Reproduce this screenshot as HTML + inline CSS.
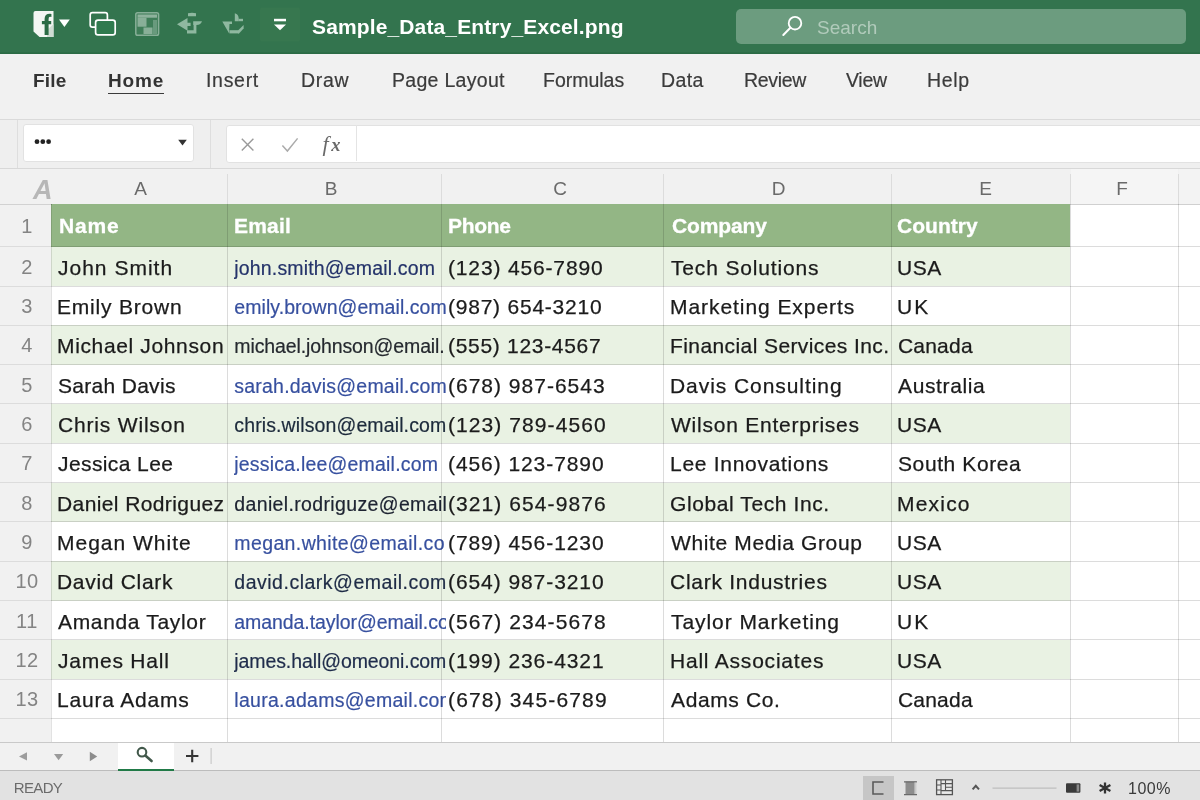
<!DOCTYPE html>
<html><head><meta charset="utf-8"><title>Excel</title>
<style>
*{box-sizing:border-box;margin:0;padding:0}
html,body{width:1200px;height:800px;overflow:hidden;background:#fff;font-family:"Liberation Sans",sans-serif;}
body{position:relative}
#title,#ribbon,#fbar,#namebox,#fxbox,#colhdr,#grid,#tabs,#status{will-change:transform}
.abs{position:absolute}
#title{position:absolute;left:0;top:0;width:1200px;height:54.5px;background:linear-gradient(#33744e 0,#33744e 51.5px,#2b6b45 53px,#2b6b45 54.5px)}
#title .fname{position:absolute;left:312px;top:0;height:54px;line-height:53px;color:#fff;font-weight:bold;font-size:21px;letter-spacing:0.2px;white-space:nowrap}
#search{position:absolute;left:736px;top:9px;width:450px;height:35px;border-radius:5px;background:#6c9c7f}
#search .ph{position:absolute;left:82px;top:0;height:35px;line-height:37px;font-size:19px;color:#b1cbbb;letter-spacing:0.4px}
#ribbon{position:absolute;left:0;top:54px;width:1200px;height:65px;background:#f1f1f1}
#ribbon .tab{position:absolute;top:0;height:52px;line-height:53.4px;font-size:19.5px;color:#3b3b3b;white-space:nowrap;letter-spacing:0.7px;-webkit-text-stroke:0.2px #3b3b3b}
#ribbon .tab.b{font-weight:bold;letter-spacing:0.2px;-webkit-text-stroke:0;font-size:19px;color:#333}
#fbar{position:absolute;left:0;top:119px;width:1200px;height:50px;background:#efefef;border-top:1px solid #dadada;border-bottom:1px solid #d8d8d8}
#namebox{position:absolute;left:23px;top:124px;width:171px;height:38px;background:#fff;border:1px solid #e2e2e2;border-radius:3px}
#fxbox{position:absolute;left:226px;top:125px;width:980px;height:37.5px;background:#fff;border:1px solid #e2e2e2;border-radius:3px}
#colhdr{position:absolute;left:0;top:169px;width:1200px;height:35px;background:#f1f1f1}
#colhdr .cl{position:absolute;top:0;height:35px;line-height:40.4px;font-size:19px;color:#6a6a6a;text-align:center;width:30px;margin-left:-15px}
#rowhdr{position:absolute;left:0;top:204px;width:52px;height:538px;background:#f1f1f1}
#grid{position:absolute;left:0;top:0;width:1200px;height:742px;overflow:hidden}
.hrow{position:absolute;background:#93b685}
.band{position:absolute;background:#e9f2e3}
.hc{position:absolute;color:#fff;font-weight:bold;font-size:21px;-webkit-text-stroke:0.3px #fff;white-space:nowrap;letter-spacing:0.2px}
.dc{position:absolute;color:#1b1b1b;font-size:21px;-webkit-text-stroke:0.25px #1b1b1b;white-space:nowrap;letter-spacing:1px;overflow:visible}
.dc.em{overflow:hidden;color:#37509f;font-size:19.5px;letter-spacing:0.3px;-webkit-text-stroke:0.2px #37509f}
.rn{position:absolute;left:1px;width:52px;text-align:center;color:#848484;font-size:20px;letter-spacing:0.5px}
.hl{position:absolute;left:0;width:1200px;height:1px;background:#dcdcdc;mix-blend-mode:multiply}
.vl{position:absolute;top:174px;height:568px;width:1px;background:#dcdcdc;mix-blend-mode:multiply}
#tabs{position:absolute;left:0;top:742px;width:1200px;height:29px;background:#f1f1f1;border-top:1px solid #c9c9c9}
#status{position:absolute;left:0;top:770px;width:1200px;height:30px;background:#e2e2e2;border-top:1px solid #bcbcbc}
#status .rdy{position:absolute;left:14px;top:0;height:30px;line-height:34px;font-size:15px;color:#6b6b6b;letter-spacing:0.6px}
#status .zoom{position:absolute;left:1129px;top:0;height:30px;line-height:35px;font-size:16px;color:#3a3a3a;letter-spacing:0.5px}

#colhdr .corner{position:absolute;left:33px;top:0;height:35px;line-height:42.5px;font-size:27px;font-weight:bold;font-style:italic;color:#b7b7b7}

#c0_0{letter-spacing:1.001px!important;left:58.00px!important}
#c1_0{letter-spacing:0.800px!important;left:57.00px!important}
#c2_0{letter-spacing:0.642px!important;left:57.00px!important}
#c3_0{letter-spacing:0.300px!important;left:58.00px!important}
#c4_0{letter-spacing:0.819px!important;left:58.00px!important}
#c5_0{letter-spacing:0.400px!important;left:58.00px!important}
#c6_0{letter-spacing:0.398px!important;left:57.00px!important}
#c7_0{letter-spacing:1.000px!important;left:57.00px!important}
#c8_0{letter-spacing:0.700px!important;left:57.00px!important}
#c9_0{letter-spacing:0.667px!important;left:58.00px!important}
#c10_0{letter-spacing:0.779px!important;left:58.00px!important}
#c11_0{letter-spacing:0.800px!important;left:57.00px!important}
#c0_2{letter-spacing:0.847px!important;left:448.00px!important}
#c1_2{letter-spacing:0.770px!important;left:448.00px!important}
#c2_2{letter-spacing:0.693px!important;left:448.00px!important}
#c3_2{letter-spacing:1.001px!important;left:448.00px!important}
#c4_2{letter-spacing:1.078px!important;left:448.00px!important}
#c5_2{letter-spacing:0.924px!important;left:448.00px!important}
#c6_2{letter-spacing:1.078px!important;left:448.00px!important}
#c7_2{letter-spacing:0.924px!important;left:448.00px!important}
#c8_2{letter-spacing:0.924px!important;left:448.00px!important}
#c9_2{letter-spacing:1.078px!important;left:448.00px!important}
#c10_2{letter-spacing:0.924px!important;left:448.00px!important}
#c11_2{letter-spacing:1.155px!important;left:448.00px!important}
#c0_3{letter-spacing:0.846px!important;left:671.00px!important}
#c1_3{letter-spacing:0.938px!important;left:670.00px!important}
#c2_3{letter-spacing:0.409px!important;left:670.00px!important}
#c3_3{letter-spacing:0.934px!important;left:670.00px!important}
#c4_3{letter-spacing:0.765px!important;left:671.00px!important}
#c5_3{letter-spacing:0.714px!important;left:670.00px!important}
#c6_3{letter-spacing:0.600px!important;left:670.00px!important}
#c7_3{letter-spacing:0.625px!important;left:671.00px!important}
#c8_3{letter-spacing:0.733px!important;left:670.00px!important}
#c9_3{letter-spacing:0.933px!important;left:671.00px!important}
#c10_3{letter-spacing:0.786px!important;left:670.00px!important}
#c11_3{letter-spacing:0.625px!important;left:671.00px!important}
#c0_4{letter-spacing:0.500px!important;left:897.00px!important}
#c1_4{letter-spacing:2.000px!important;left:897.00px!important}
#c2_4{letter-spacing:0.200px!important;left:898.00px!important}
#c3_4{letter-spacing:0.625px!important;left:898.00px!important}
#c4_4{letter-spacing:0.500px!important;left:897.00px!important}
#c5_4{letter-spacing:0.600px!important;left:898.00px!important}
#c6_4{letter-spacing:1.200px!important;left:897.00px!important}
#c7_4{letter-spacing:0.500px!important;left:897.00px!important}
#c8_4{letter-spacing:0.500px!important;left:897.00px!important}
#c9_4{letter-spacing:2.000px!important;left:897.00px!important}
#c10_4{letter-spacing:0.500px!important;left:897.00px!important}
#c11_4{letter-spacing:0.200px!important;left:898.00px!important}
#h0{letter-spacing:0.866px!important;left:59.00px!important}
#h1{letter-spacing:0.200px!important;left:234.00px!important}
#h2{letter-spacing:-0.300px!important;left:448.00px!important}
#h3{letter-spacing:-0.134px!important;left:672.00px!important}
#h4{letter-spacing:0.033px!important;left:897.00px!important}
#t_file{letter-spacing:0.200px!important;left:33.00px!important}
#t_home{letter-spacing:0.867px!important;left:108.00px!important}
#t_insert{letter-spacing:0.700px!important;left:206.00px!important}
#t_draw{letter-spacing:0.701px!important;left:301.00px!important}
#t_page{letter-spacing:0.300px!important;left:392.00px!important}
#t_form{letter-spacing:-0.015px!important;left:543.00px!important}
#t_data{letter-spacing:0.366px!important;left:661.00px!important}
#t_review{letter-spacing:-0.300px!important;left:744.00px!important}
#t_view{letter-spacing:-0.301px!important;left:846.00px!important}
#t_help{letter-spacing:0.701px!important;left:927.00px!important}
#fname{letter-spacing:0.130px!important;left:312.00px!important}
#rdy{letter-spacing:-0.650px!important;left:13.80px!important}
#zoom{letter-spacing:0.500px!important;left:1128.00px!important}
#sph{letter-spacing:0.000px!important;left:81.00px!important}
#c0_1{letter-spacing:0.164px!important;left:234.30px!important}
#c1_1{letter-spacing:0.060px!important;left:234.30px!important}
#c2_1{letter-spacing:-0.109px!important;left:234.30px!important}
#c3_1{letter-spacing:0.210px!important;left:234.30px!important}
#c4_1{letter-spacing:0.118px!important;left:234.30px!important}
#c5_1{letter-spacing:0.200px!important;left:234.30px!important}
#c6_1{letter-spacing:0.357px!important;left:234.30px!important}
#c7_1{letter-spacing:0.384px!important;left:234.30px!important}
#c8_1{letter-spacing:0.510px!important;left:234.30px!important}
#c9_1{letter-spacing:-0.073px!important;left:234.30px!important}
#c10_1{letter-spacing:-0.090px!important;left:234.30px!important}
#c11_1{letter-spacing:0.280px!important;left:234.30px!important}
</style></head>
<body>
<div id="title">
  <svg class="abs" style="left:0;top:0" width="310" height="54" viewBox="0 0 310 54">
    <!-- app icon -->
    <path d="M35.5 11 H53.5 V37 H39.5 L33.5 31.5 V13 Q33.5 11 35.5 11 Z" fill="#f3f6f3"/>
    <path d="M47 30 L53.5 24 V37 H47 Z" fill="#cfdcd3"/>
    <path d="M44.6 35 V24.2 H41.9 V21 H44.6 V19 Q44.6 13.6 50 13.7 Q51 13.7 51.4 13.9 V17 Q50.6 16.8 50 16.8 Q48.6 16.9 48.6 19 V21 H51.2 V24.2 H48.6 V35 Z" fill="#2b6b45"/>
    <path d="M59 19.5 H69.8 L64.4 27 Z" fill="#fff"/>
    <!-- two overlapping rects -->
    <rect x="90.2" y="12.7" width="17.2" height="14.4" rx="2.2" fill="none" stroke="#fff" stroke-width="1.7"/>
    <rect x="95.6" y="20.2" width="19.6" height="14.6" rx="2.4" fill="#2f7a4e" stroke="#fff" stroke-width="1.7"/>
    <!-- faded layout icon -->
    <g opacity="0.5">
      <rect x="135.8" y="12.8" width="22.8" height="22.4" rx="1.8" fill="#5d937195" stroke="#dbe8df" stroke-width="1.5"/>
      <rect x="137.5" y="14.5" width="19.5" height="3.2" fill="#e8f0ea"/>
      <rect x="137.5" y="17.7" width="9" height="9" fill="#dfeae2"/>
      <rect x="143.5" y="27.5" width="9" height="6.5" fill="#dfeae2"/>
      <rect x="153" y="20" width="4" height="14" fill="#9fc0ac"/>
    </g>
    <!-- faded undo -->
    <g fill="#8fb8a0">
      <path d="M177 24.3 L187.5 17.9 V22.8 H190.6 V26 H187.5 V30.7 Z"/>
      <path d="M188 13.2 Q192 12.3 196 13.2 V16.2 H188 Z"/>
      <path d="M193.2 21.2 H202 Q201 24.8 196.5 25 H193.2 Z"/>
      <path d="M193.6 25 H196.4 V33.4 H187 V30.2 H193.6 Z"/>
    </g>
    <!-- faded redo -->
    <g fill="#8fb8a0">
      <path d="M234.8 13.2 Q238.6 14 238.8 19 V21.2 H234.8 Z"/>
      <path d="M238.8 18.8 H243 V21.2 H238.8 Z"/>
      <path d="M222.3 21.4 H232 V24 H229.5 L229 33.2 Z"/>
      <path d="M229.4 30.2 H238.6 V33.4 H229.4 Z"/>
      <path d="M238 30.6 L243.6 25 V28.4 L239 33.4 H238 Z"/>
    </g>
    <!-- customize -->
    <rect x="260" y="7.5" width="40" height="34" rx="2" fill="#37774f"/>
    <rect x="274" y="18.8" width="12" height="2.5" fill="#fff"/>
    <path d="M274 24.6 H286 L280 30.2 Z" fill="#fff"/>
  </svg>
  <div class="fname" id="fname">Sample_Data_Entry_Excel.png</div>
  <div id="search">
    <svg class="abs" style="left:40px;top:4px" width="30" height="28" viewBox="776 13 30 28"><circle cx="795" cy="23.2" r="6.3" fill="none" stroke="#fff" stroke-width="1.8"/><path d="M790.4 27.8 L783.3 35" stroke="#fff" stroke-width="2" stroke-linecap="round"/></svg>
    <div class="ph" id="sph">Search</div>
  </div>
</div>
<div id="ribbon">
  <div id="t_file" class="tab b" style="left:33px">File</div>
  <div id="t_home" class="tab b" style="left:108px">Home</div>
  <div id="t_insert" class="tab" style="left:207px">Insert</div>
  <div id="t_draw" class="tab" style="left:302px">Draw</div>
  <div id="t_page" class="tab" style="left:393px">Page Layout</div>
  <div id="t_form" class="tab" style="left:544px">Formulas</div>
  <div id="t_data" class="tab" style="left:662px">Data</div>
  <div id="t_review" class="tab" style="left:744px">Review</div>
  <div id="t_view" class="tab" style="left:845px">View</div>
  <div id="t_help" class="tab" style="left:928px">Help</div>
  <div class="abs" style="left:108px;top:38.5px;width:56px;height:1.5px;background:#3b3b3b"></div>
</div>
<div id="fbar">
  <div class="abs" style="left:17px;top:0;width:1px;height:48px;background:#dedede"></div>
  <div class="abs" style="left:210px;top:0;width:1px;height:48px;background:#dedede"></div>
</div>
<div id="namebox">
  <svg class="abs" style="left:-1px;top:-1px" width="171" height="38" viewBox="23 124 171 38">
    <circle cx="37" cy="141.7" r="2.4" fill="#222"/><circle cx="42.8" cy="141.7" r="2.4" fill="#222"/><circle cx="48.6" cy="141.7" r="2.4" fill="#222"/>
    <path d="M178.2 139.8 H186.8 L182.5 145.6 Z" fill="#333"/>
  </svg>
</div>
<div id="fxbox">
  <svg class="abs" style="left:-1px;top:-2px" width="140" height="38" viewBox="226 124 140 38">
    <path d="M241.8 138.8 L253.4 150.4 M253.4 138.8 L241.8 150.4" stroke="#9a9a9a" stroke-width="1.4" fill="none"/>
    <path d="M282.4 145.6 L287.4 151 L297.6 138.4" stroke="#ababab" stroke-width="1.5" fill="none"/>
    <text x="322.5" y="150.6" font-family="Liberation Serif" font-style="italic" font-size="22" fill="#6a6a6a">f</text>
    <text x="331.3" y="150.6" font-family="Liberation Serif" font-style="italic" font-weight="bold" font-size="18.5" fill="#6a6a6a">x</text>
    <rect x="356" y="125" width="1" height="36" fill="#e4e4e4"/>
  </svg>
</div>
<div id="colhdr">
  <div class="abs" style="left:1070.5px;top:0;width:107.5px;height:35px;background:#f5f5f5"></div>
  <div class="abs" style="left:1178.5px;top:0;width:22px;height:35px;background:#f3f3f3"></div>
  <div class="corner">A</div>
  <div class="cl" style="left:140.7px">A</div>
  <div class="cl" style="left:331px">B</div>
  <div class="cl" style="left:560px">C</div>
  <div class="cl" style="left:778.5px">D</div>
  <div class="cl" style="left:985.5px">E</div>
  <div class="cl" style="left:1122px">F</div>
</div>
<div id="rowhdr"></div>

<div id="grid">
<div class="hrow" style="top:204px;height:42.69999999999999px;left:51px;width:1019px"></div>
<div class="hc" id="h0" style="left:58px;top:204px;height:42.69999999999999px;line-height:43.69999999999999px">Name</div>
<div class="hc" id="h1" style="left:233px;top:204px;height:42.69999999999999px;line-height:43.69999999999999px">Email</div>
<div class="hc" id="h2" style="left:447px;top:204px;height:42.69999999999999px;line-height:43.69999999999999px">Phone</div>
<div class="hc" id="h3" style="left:669px;top:204px;height:42.69999999999999px;line-height:43.69999999999999px">Company</div>
<div class="hc" id="h4" style="left:897px;top:204px;height:42.69999999999999px;line-height:43.69999999999999px">Country</div>
<div class="rn" id="rn1" style="top:204px;height:43px;line-height:45px">1</div>
<div class="band" style="top:246.70px;height:39.32px;left:51px;width:1019px"></div>
<div class="rn" id="rn2" style="top:246.70px;height:39.32px;line-height:41.72px">2</div>
<div class="dc" id="c0_0" style="left:58px;top:246.70px;height:39.32px;line-height:41.52px;width:168px">John Smith</div>
<div class="dc em" id="c0_1" style="left:233.5px;color:#24336a;-webkit-text-stroke-color:#24336a;top:246.70px;height:39.32px;line-height:42.52px;width:213.5px">john.smith@email.com</div>
<div class="dc" id="c0_2" style="left:447px;top:246.70px;height:39.32px;line-height:41.52px;width:215px">(123) 456-7890</div>
<div class="dc" id="c0_3" style="left:669px;top:246.70px;height:39.32px;line-height:41.52px;width:221px">Tech Solutions</div>
<div class="dc" id="c0_4" style="left:897px;top:246.70px;height:39.32px;line-height:41.52px;width:172px">USA</div>
<div class="rn" id="rn3" style="top:286.02px;height:39.32px;line-height:41.72px">3</div>
<div class="dc" id="c1_0" style="left:58px;top:286.02px;height:39.32px;line-height:41.52px;width:168px">Emily Brown</div>
<div class="dc em" id="c1_1" style="left:233.5px;color:#37509f;-webkit-text-stroke-color:#37509f;top:286.02px;height:39.32px;line-height:42.52px;width:213.5px">emily.brown@email.com</div>
<div class="dc" id="c1_2" style="left:447px;top:286.02px;height:39.32px;line-height:41.52px;width:215px">(987) 654-3210</div>
<div class="dc" id="c1_3" style="left:669px;top:286.02px;height:39.32px;line-height:41.52px;width:221px">Marketing Experts</div>
<div class="dc" id="c1_4" style="left:897px;top:286.02px;height:39.32px;line-height:41.52px;width:172px">UK</div>
<div class="band" style="top:325.34px;height:39.32px;left:51px;width:1019px"></div>
<div class="rn" id="rn4" style="top:325.34px;height:39.32px;line-height:41.72px">4</div>
<div class="dc" id="c2_0" style="left:58px;top:325.34px;height:39.32px;line-height:41.52px;width:168px">Michael Johnson</div>
<div class="dc em" id="c2_1" style="left:233.5px;color:#25292f;-webkit-text-stroke-color:#25292f;top:325.34px;height:39.32px;line-height:42.52px;width:213.5px">michael.johnson@email.</div>
<div class="dc" id="c2_2" style="left:447px;top:325.34px;height:39.32px;line-height:41.52px;width:215px">(555) 123-4567</div>
<div class="dc" id="c2_3" style="left:669px;top:325.34px;height:39.32px;line-height:41.52px;width:221px">Financial Services Inc.</div>
<div class="dc" id="c2_4" style="left:897px;top:325.34px;height:39.32px;line-height:41.52px;width:172px">Canada</div>
<div class="rn" id="rn5" style="top:364.66px;height:39.32px;line-height:41.72px">5</div>
<div class="dc" id="c3_0" style="left:58px;top:364.66px;height:39.32px;line-height:41.52px;width:168px">Sarah Davis</div>
<div class="dc em" id="c3_1" style="left:233.5px;color:#37509f;-webkit-text-stroke-color:#37509f;top:364.66px;height:39.32px;line-height:42.52px;width:213.5px">sarah.davis@email.com</div>
<div class="dc" id="c3_2" style="left:447px;top:364.66px;height:39.32px;line-height:41.52px;width:215px">(678) 987-6543</div>
<div class="dc" id="c3_3" style="left:669px;top:364.66px;height:39.32px;line-height:41.52px;width:221px">Davis Consulting</div>
<div class="dc" id="c3_4" style="left:897px;top:364.66px;height:39.32px;line-height:41.52px;width:172px">Australia</div>
<div class="band" style="top:403.98px;height:39.32px;left:51px;width:1019px"></div>
<div class="rn" id="rn6" style="top:403.98px;height:39.32px;line-height:41.72px">6</div>
<div class="dc" id="c4_0" style="left:58px;top:403.98px;height:39.32px;line-height:41.52px;width:168px">Chris Wilson</div>
<div class="dc em" id="c4_1" style="left:233.5px;color:#1c2a3b;-webkit-text-stroke-color:#1c2a3b;top:403.98px;height:39.32px;line-height:42.52px;width:213.5px">chris.wilson@email.com</div>
<div class="dc" id="c4_2" style="left:447px;top:403.98px;height:39.32px;line-height:41.52px;width:215px">(123) 789-4560</div>
<div class="dc" id="c4_3" style="left:669px;top:403.98px;height:39.32px;line-height:41.52px;width:221px">Wilson Enterprises</div>
<div class="dc" id="c4_4" style="left:897px;top:403.98px;height:39.32px;line-height:41.52px;width:172px">USA</div>
<div class="rn" id="rn7" style="top:443.30px;height:39.32px;line-height:41.72px">7</div>
<div class="dc" id="c5_0" style="left:58px;top:443.30px;height:39.32px;line-height:41.52px;width:168px">Jessica Lee</div>
<div class="dc em" id="c5_1" style="left:233.5px;color:#37509f;-webkit-text-stroke-color:#37509f;top:443.30px;height:39.32px;line-height:42.52px;width:213.5px">jessica.lee@email.com</div>
<div class="dc" id="c5_2" style="left:447px;top:443.30px;height:39.32px;line-height:41.52px;width:215px">(456) 123-7890</div>
<div class="dc" id="c5_3" style="left:669px;top:443.30px;height:39.32px;line-height:41.52px;width:221px">Lee Innovations</div>
<div class="dc" id="c5_4" style="left:897px;top:443.30px;height:39.32px;line-height:41.52px;width:172px">South Korea</div>
<div class="band" style="top:482.62px;height:39.32px;left:51px;width:1019px"></div>
<div class="rn" id="rn8" style="top:482.62px;height:39.32px;line-height:41.72px">8</div>
<div class="dc" id="c6_0" style="left:58px;top:482.62px;height:39.32px;line-height:41.52px;width:168px">Daniel Rodriguez</div>
<div class="dc em" id="c6_1" style="left:233.5px;color:#1d2331;-webkit-text-stroke-color:#1d2331;top:482.62px;height:39.32px;line-height:42.52px;width:213.5px">daniel.rodriguze@email</div>
<div class="dc" id="c6_2" style="left:447px;top:482.62px;height:39.32px;line-height:41.52px;width:215px">(321) 654-9876</div>
<div class="dc" id="c6_3" style="left:669px;top:482.62px;height:39.32px;line-height:41.52px;width:221px">Global Tech Inc.</div>
<div class="dc" id="c6_4" style="left:897px;top:482.62px;height:39.32px;line-height:41.52px;width:172px">Mexico</div>
<div class="rn" id="rn9" style="top:521.94px;height:39.32px;line-height:41.72px">9</div>
<div class="dc" id="c7_0" style="left:58px;top:521.94px;height:39.32px;line-height:41.52px;width:168px">Megan White</div>
<div class="dc em" id="c7_1" style="left:233.5px;color:#37509f;-webkit-text-stroke-color:#37509f;top:521.94px;height:39.32px;line-height:42.52px;width:213.5px">megan.white@email.co</div>
<div class="dc" id="c7_2" style="left:447px;top:521.94px;height:39.32px;line-height:41.52px;width:215px">(789) 456-1230</div>
<div class="dc" id="c7_3" style="left:669px;top:521.94px;height:39.32px;line-height:41.52px;width:221px">White Media Group</div>
<div class="dc" id="c7_4" style="left:897px;top:521.94px;height:39.32px;line-height:41.52px;width:172px">USA</div>
<div class="band" style="top:561.26px;height:39.32px;left:51px;width:1019px"></div>
<div class="rn" id="rn10" style="top:561.26px;height:39.32px;line-height:41.72px">10</div>
<div class="dc" id="c8_0" style="left:58px;top:561.26px;height:39.32px;line-height:41.52px;width:168px">David Clark</div>
<div class="dc em" id="c8_1" style="left:233.5px;color:#1e2b46;-webkit-text-stroke-color:#1e2b46;top:561.26px;height:39.32px;line-height:42.52px;width:213.5px">david.clark@email.com</div>
<div class="dc" id="c8_2" style="left:447px;top:561.26px;height:39.32px;line-height:41.52px;width:215px">(654) 987-3210</div>
<div class="dc" id="c8_3" style="left:669px;top:561.26px;height:39.32px;line-height:41.52px;width:221px">Clark Industries</div>
<div class="dc" id="c8_4" style="left:897px;top:561.26px;height:39.32px;line-height:41.52px;width:172px">USA</div>
<div class="rn" id="rn11" style="top:600.58px;height:39.32px;line-height:41.72px">11</div>
<div class="dc" id="c9_0" style="left:58px;top:600.58px;height:39.32px;line-height:41.52px;width:168px">Amanda Taylor</div>
<div class="dc em" id="c9_1" style="left:233.5px;color:#37509f;-webkit-text-stroke-color:#37509f;top:600.58px;height:39.32px;line-height:42.52px;width:211.3px">amanda.taylor@email.co</div>
<div class="dc" id="c9_2" style="left:447px;top:600.58px;height:39.32px;line-height:41.52px;width:215px">(567) 234-5678</div>
<div class="dc" id="c9_3" style="left:669px;top:600.58px;height:39.32px;line-height:41.52px;width:221px">Taylor Marketing</div>
<div class="dc" id="c9_4" style="left:897px;top:600.58px;height:39.32px;line-height:41.52px;width:172px">UK</div>
<div class="band" style="top:639.90px;height:39.32px;left:51px;width:1019px"></div>
<div class="rn" id="rn12" style="top:639.90px;height:39.32px;line-height:41.72px">12</div>
<div class="dc" id="c10_0" style="left:58px;top:639.90px;height:39.32px;line-height:41.52px;width:168px">James Hall</div>
<div class="dc em" id="c10_1" style="left:233.5px;color:#1f2c4b;-webkit-text-stroke-color:#1f2c4b;top:639.90px;height:39.32px;line-height:42.52px;width:213.5px">james.hall@omeoni.com</div>
<div class="dc" id="c10_2" style="left:447px;top:639.90px;height:39.32px;line-height:41.52px;width:215px">(199) 236-4321</div>
<div class="dc" id="c10_3" style="left:669px;top:639.90px;height:39.32px;line-height:41.52px;width:221px">Hall Associates</div>
<div class="dc" id="c10_4" style="left:897px;top:639.90px;height:39.32px;line-height:41.52px;width:172px">USA</div>
<div class="rn" id="rn13" style="top:679.22px;height:39.32px;line-height:41.72px">13</div>
<div class="dc" id="c11_0" style="left:58px;top:679.22px;height:39.32px;line-height:41.52px;width:168px">Laura Adams</div>
<div class="dc em" id="c11_1" style="left:233.5px;color:#37509f;-webkit-text-stroke-color:#37509f;top:679.22px;height:39.32px;line-height:42.52px;width:211.3px">laura.adams@email.com</div>
<div class="dc" id="c11_2" style="left:447px;top:679.22px;height:39.32px;line-height:41.52px;width:215px">(678) 345-6789</div>
<div class="dc" id="c11_3" style="left:669px;top:679.22px;height:39.32px;line-height:41.52px;width:221px">Adams Co.</div>
<div class="dc" id="c11_4" style="left:897px;top:679.22px;height:39.32px;line-height:41.52px;width:172px">Canada</div>
<div class="hl" style="top:246.20px"></div>
<div class="hl" style="top:285.52px"></div>
<div class="hl" style="top:324.84px"></div>
<div class="hl" style="top:364.16px"></div>
<div class="hl" style="top:403.48px"></div>
<div class="hl" style="top:442.80px"></div>
<div class="hl" style="top:482.12px"></div>
<div class="hl" style="top:521.44px"></div>
<div class="hl" style="top:560.76px"></div>
<div class="hl" style="top:600.08px"></div>
<div class="hl" style="top:639.40px"></div>
<div class="hl" style="top:678.72px"></div>
<div class="hl" style="top:718.04px"></div>
<div class="hl" style="top:757.36px"></div>
<div class="hl" style="top:203.6px;width:52px;background:#d2d2d2"></div>
<div class="hl" style="top:203.6px;left:1070px;width:130px;background:#d0d0d0"></div>
<div class="vl" style="left:51px;top:204px;height:538px;background:#e2e2e2"></div>
<div class="vl" style="left:226.5px"></div>
<div class="vl" style="left:440.5px"></div>
<div class="vl" style="left:662.5px"></div>
<div class="vl" style="left:890.5px"></div>
<div class="vl" style="left:1069.5px"></div>
<div class="vl" style="left:1177.5px"></div>
</div>
<div id="tabs">
  <div class="abs" style="left:117.5px;top:0;width:56px;height:28px;background:#fff"></div>
  <svg class="abs" style="left:0;top:-1px" width="240" height="30" viewBox="0 742 240 30">
    <path d="M27 752.3 V760.6 L19 756.4 Z" fill="#9c9c9c"/>
    <path d="M54 754 H63.2 L58.6 760.2 Z" fill="#9a9a9a"/>
    <path d="M89.8 751.8 V761.2 L97.2 756.5 Z" fill="#8c8c8c"/>
    <circle cx="142" cy="752.2" r="4.3" fill="none" stroke="#41584a" stroke-width="2.1"/>
    <path d="M145.3 755.6 L151.6 761" stroke="#41584a" stroke-width="2.6" stroke-linecap="round"/>
    <path d="M186 756 H198.4 M192.2 749.8 V762.2" stroke="#353535" stroke-width="2.1"/>
    <rect x="210.6" y="748" width="1" height="16" fill="#c2c2c2"/>
  </svg>
</div>
<div id="status">
  <div class="rdy" id="rdy">READY</div>
  <div class="abs" style="left:863px;top:4.5px;width:30.5px;height:25px;background:#c6c6c6"></div>
  <svg class="abs" style="left:860px;top:-1px" width="270" height="30" viewBox="860 770 270 30">
    <path d="M883.5 782 H873 V794 H883.5" fill="none" stroke="#5a5a5a" stroke-width="1.6"/>
    <rect x="905.5" y="781.6" width="10.5" height="12.8" fill="#8d8d8d"/>
    <path d="M904 781.8 H917 M904 794.6 H917" stroke="#6a6a6a" stroke-width="1.2"/>
    <rect x="914.4" y="782.4" width="2" height="11.6" fill="#c9c9c9"/>
    <rect x="936.6" y="779.8" width="15.8" height="14.8" fill="#e9e9e9" stroke="#555" stroke-width="1.3"/>
    <path d="M941 780 V794.5 M945.5 780 V790 M941 783.6 H952 M945.5 787.2 H952 M941 790.6 H952 M937 785 H941 M937 790 H941" stroke="#555" stroke-width="1.1" fill="none"/>
    <path d="M972.6 789.4 L975.8 785.8 L979 789.4" fill="none" stroke="#555" stroke-width="2"/>
    <rect x="992.5" y="787.5" width="64" height="1.2" fill="#bdbdbd"/>
    <rect x="1066" y="783.2" width="14.4" height="9.6" rx="1" fill="#3a3a3a"/>
    <rect x="1076.6" y="784.4" width="2.6" height="7.2" fill="#8a8a8a"/>
    <path d="M1105 782.4 V793.6 M1099.6 785 L1110.4 791 M1110.4 785 L1099.6 791" stroke="#333" stroke-width="2.3"/>
  </svg>
  <div class="zoom" id="zoom">100%</div>
</div>
<div class="abs" style="left:117.5px;top:768.8px;width:56px;height:2.2px;background:#217a47;will-change:transform"></div>

</body></html>
